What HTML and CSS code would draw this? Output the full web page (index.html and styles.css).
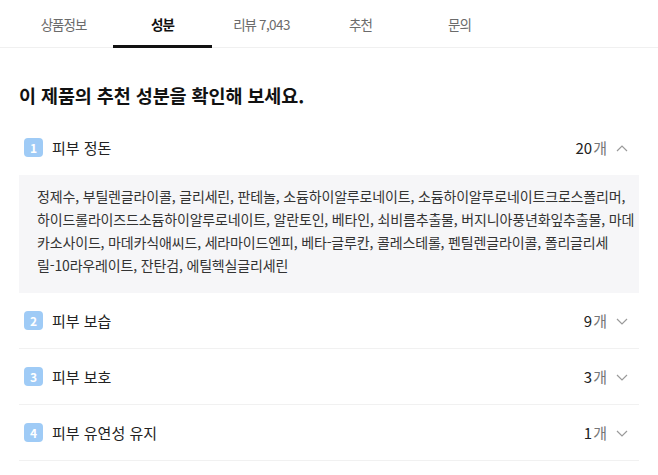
FILE: index.html
```html
<!DOCTYPE html>
<html lang="ko">
<head>
    <meta charset="UTF-8">
    <meta name="viewport" content="width=device-width, initial-scale=1.0">
    <title>성분</title>
    <link rel="stylesheet" href="styles.css">
</head>
<body>
    <nav class="tabs">
        <a class="tab">상품정보</a>
        <a class="tab active">성분</a>
        <a class="tab">리뷰 <span class="count">7,043</span></a>
        <a class="tab">추천</a>
        <a class="tab">문의</a>
    </nav>

    <div class="container">
        <h2 class="title">이 제품의 추천 성분을 확인해 보세요.</h2>

        <div class="group open">
            <div class="row">
                <span class="badge">1</span>
                <span class="label">피부 정돈</span>
                <span class="amount">20<span class="unit">개</span></span>
                <svg class="chevron" width="12" height="8" viewBox="0 0 12 8"><polyline points="1,7 6,2 11,7" fill="none" stroke="#9a9a9a" stroke-width="1.2"/></svg>
            </div>
            <div class="ingredients">
                정제수, 부틸렌글라이콜, 글리세린, 판테놀, 소듐하이알루로네이트, 소듐하이알루로네이트크로스폴리머,<br>
                하이드롤라이즈드소듐하이알루로네이트, 알란토인, 베타인, 쇠비름추출물, 버지니아풍년화잎추출물, 마데<br>
                카소사이드, 마데카식애씨드, 세라마이드엔피, 베타-글루칸, 콜레스테롤, 펜틸렌글라이콜, 폴리글리세<br>
                릴-10라우레이트, 잔탄검, 에틸헥실글리세린
            </div>
        </div>

        <div class="group">
            <div class="row">
                <span class="badge">2</span>
                <span class="label">피부 보습</span>
                <span class="amount">9<span class="unit">개</span></span>
                <svg class="chevron" width="12" height="8" viewBox="0 0 12 8"><polyline points="1,2 6,7 11,2" fill="none" stroke="#9a9a9a" stroke-width="1.2"/></svg>
            </div>
        </div>

        <div class="group">
            <div class="row">
                <span class="badge">3</span>
                <span class="label">피부 보호</span>
                <span class="amount">3<span class="unit">개</span></span>
                <svg class="chevron" width="12" height="8" viewBox="0 0 12 8"><polyline points="1,2 6,7 11,2" fill="none" stroke="#9a9a9a" stroke-width="1.2"/></svg>
            </div>
        </div>

        <div class="group">
            <div class="row">
                <span class="badge">4</span>
                <span class="label">피부 유연성 유지</span>
                <span class="amount">1<span class="unit">개</span></span>
                <svg class="chevron" width="12" height="8" viewBox="0 0 12 8"><polyline points="1,2 6,7 11,2" fill="none" stroke="#9a9a9a" stroke-width="1.2"/></svg>
            </div>
        </div>
    </div>
</body>
</html>
```

FILE: styles.css
```css
body {
    margin: 0;
    font-family: "Noto Sans CJK KR", "Noto Sans", sans-serif;
    color: #222;
    background: #fff;
}
.tabs {
    display: flex;
    padding-left: 14px;
    height: 47px;
    border-bottom: 1px solid #f0f0f0;
}
.tab {
    width: 99px;
    display: flex;
    align-items: center;
    justify-content: center;
    font-size: 13.5px;
    color: #6b6b6b;
    letter-spacing: -1px;
}
.tab .count {
    margin-left: 3px;
    letter-spacing: -0.6px;
}
.tab.active {
    color: #111;
    font-weight: 700;
    border-bottom: 3px solid #111;
    padding-top: 3px;
    margin-bottom: -1px;
}
.container {
    margin: 0 19px;
}
.title {
    margin: 34px 0 12px;
    font-size: 18.5px;
    line-height: 26px;
    font-weight: 700;
    color: #111;
    letter-spacing: -0.1px;
}
.group {
    border-bottom: 1px solid #f1f1f1;
}
.group.open {
    border-bottom: none;
}
.row {
    display: flex;
    align-items: center;
    height: 55px;
    padding: 0 11px 0 5px;
}
.badge {
    width: 19px;
    height: 19px;
    border-radius: 4px;
    background: #9fcbf6;
    color: #fff;
    font-size: 12px;
    font-weight: 700;
    display: flex;
    align-items: center;
    justify-content: center;
}
.label {
    margin-left: 9px;
    font-size: 15px;
    color: #222;
    flex: 1;
}
.amount {
    font-size: 15px;
    color: #222;
}
.unit {
    color: #777;
    margin-left: 1px;
}
.chevron {
    margin-left: 9px;
}
.ingredients {
    background: #f6f6f8;
    padding: 10px 18px 16px;
    font-size: 14px;
    line-height: 23px;
    color: #333;
    letter-spacing: -0.16px;
    white-space: nowrap;
}
```
